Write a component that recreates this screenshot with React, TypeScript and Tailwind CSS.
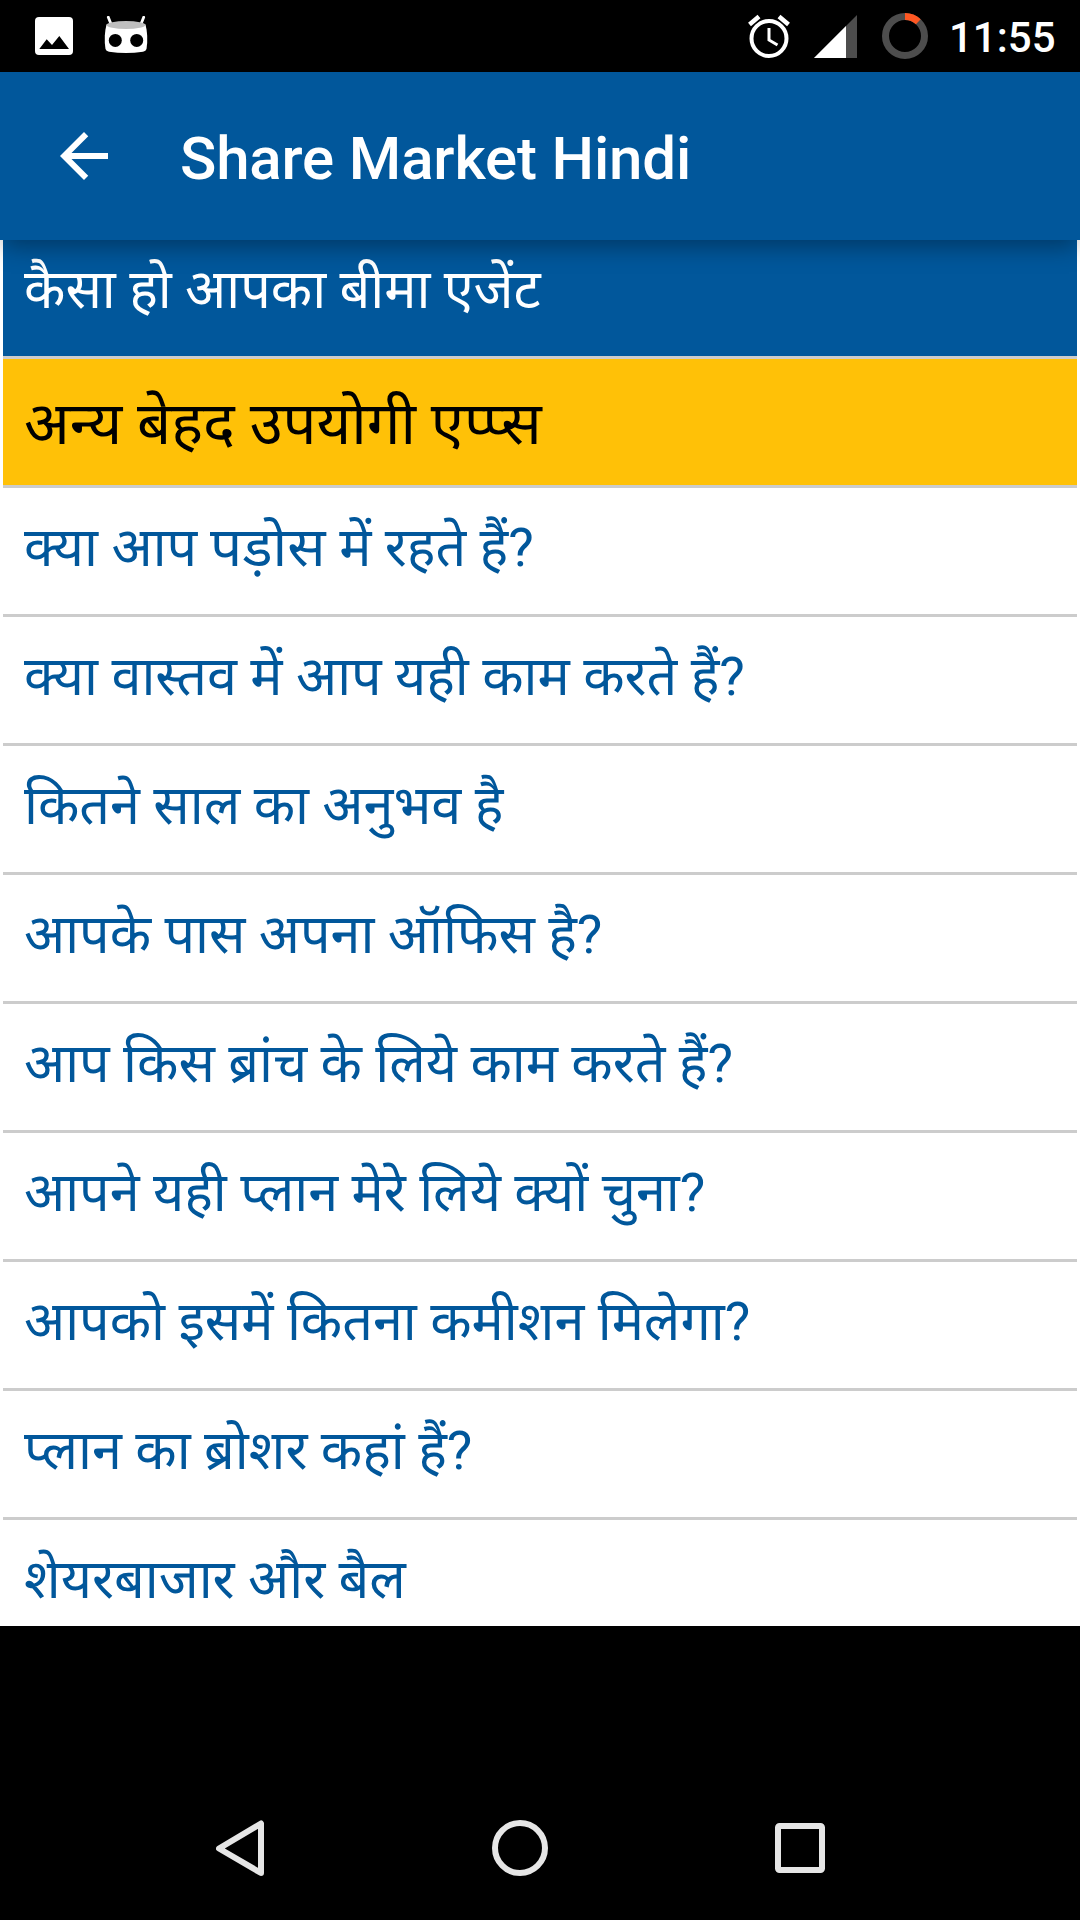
const rows = [
  <>
    क्या आप <span className="mr-[5.5px] inline-block origin-left scale-x-[1.052]">पड़ोस</span> में रहते हैं?
  </>,
  "क्या वास्तव में आप यही काम करते हैं?",
  "कितने साल का अनुभव है",
  "आपके पास अपना ऑफिस है?",
  "आप किस ब्रांच के लिये काम करते हैं?",
  "आपने यही प्लान मेरे लिये क्यों चुना?",
  "आपको इसमें कितना कमीशन मिलेगा?",
  "प्लान का ब्रोशर कहां हैं?",
  "शेयरबाजार और बैल",
];

function StatusBar() {
  return (
    <div className="flex h-[72px] shrink-0 items-center bg-black text-white">
      <svg className="ml-[35px] h-[38px] w-[38px]" viewBox="0 0 38 38">
        <rect width="38" height="38" rx="4" fill="#fff" />
        <path d="M4.3 32 L11.7 22.3 L17 28 L24.3 19 L34 32 Z" fill="#000" />
      </svg>
      <svg className="ml-[30px] h-[40px] w-[46px]" viewBox="0 0 46 40">
        <path d="M5.3 1.2 L8 8 M40.7 1.2 L38 8" stroke="#fff" strokeWidth="2.8" strokeLinecap="round" />
        <path d="M3.5 8.5 H42.5 Q45.5 20 43.5 33 Q43 35 40 35.7 Q23 38.3 6 35.7 Q3 35 2.5 33 Q0.5 20 3.5 8.5Z" fill="#fff" />
        <ellipse cx="23" cy="9" rx="19.5" ry="4" fill="#bfbfbf" />
        <circle cx="12.3" cy="24.4" r="6.5" fill="#000" />
        <circle cx="33.7" cy="24.4" r="6.5" fill="#000" />
      </svg>
      <svg className="ml-auto h-[44px] w-[42px]" viewBox="0 0 42 44" fill="none" stroke="#fff">
        <circle cx="21" cy="24.5" r="17.5" strokeWidth="4" />
        <path d="M21 14 V26 L29.5 31" strokeWidth="3" />
        <path d="M1.5 10.5 L11 2.5 M40.5 10.5 L31 2.5" strokeWidth="4.5" />
      </svg>
      <svg className="ml-[24px] h-[43px] w-[43px]" viewBox="0 0 43 43">
        <path d="M0 43 L43 0 V43Z" fill="#4d4d4d" />
        <path d="M0 43 L32 11 V43Z" fill="#fff" />
      </svg>
      <svg className="ml-[25px] h-[46px] w-[46px]" viewBox="0 0 46 46" fill="none" strokeWidth="7">
        <circle cx="23" cy="23" r="19.5" stroke="#4d4d4d" />
        <path d="M23 3.5 A19.5 19.5 0 0 1 36.3 8.7" stroke="#ff5722" />
      </svg>
      <span className="mr-[23px] ml-[21px] w-[108px] pt-[3px] text-[42px] leading-[72px] font-medium whitespace-nowrap">11:55</span>
    </div>
  );
}

function NavigationBar() {
  return (
    <nav className="flex h-[144px] items-center bg-black pl-[216px]">
      <svg className="h-[56px] w-[48px]" viewBox="0 0 48 56" fill="none" stroke="#e6e6e6" strokeWidth="6" strokeLinejoin="round">
        <path d="M3 28.5 L45 3.5 V53 Z" />
      </svg>
      <svg className="ml-[228px] h-[56px] w-[56px]" viewBox="0 0 56 56" fill="none" stroke="#e6e6e6" strokeWidth="6">
        <circle cx="28" cy="28" r="25" />
      </svg>
      <svg className="ml-[227px] h-[50px] w-[50px]" viewBox="0 0 50 50" fill="none" stroke="#e6e6e6" strokeWidth="6">
        <rect x="3" y="3" width="44" height="44" rx="1.5" />
      </svg>
    </nav>
  );
}

export default function App() {
  return (
    <div className="flex h-[1920px] w-[1080px] flex-col overflow-hidden bg-black font-[Roboto,'Noto_Sans','Noto_Sans_Devanagari',sans-serif]">
      <StatusBar />
      <header className="relative z-10 flex h-[168px] shrink-0 items-center bg-[#01579b] text-white shadow-[0_10px_22px_-3px_rgba(0,0,0,0.34)]">
        <svg className="ml-[60px] h-[48px] w-[48px]" viewBox="4 4 16 16" fill="#fff">
          <path d="M20 11H7.83l5.59-5.59L12 4l-8 8 8 8 1.41-1.41L7.83 13H20v-2z" />
        </svg>
        <h1 className="ml-[72px] pt-1.5 text-[60px] leading-[72px] font-medium tracking-[-0.15px] whitespace-nowrap">Share Market Hindi</h1>
      </header>
      <main className="h-[1386px] shrink-0 overflow-hidden bg-white px-[3px] text-[53.9px] leading-[100px] whitespace-nowrap text-[#01579b]">
        <div className="h-[119px] border-b-[3px] border-[#cccccc] bg-[#01579b] pl-[21px] text-white">कैसा हो आपका बीमा एजेंट</div>
        <div className="h-[129px] border-b-[3px] border-[#cccccc] bg-[#ffc107] pl-[21px] text-[59.9px] leading-[129px] text-black">अन्य बेहद उपयोगी एप्प्स</div>
        {rows.map((row, index) => (
          <div key={index} className="h-[129px] border-b-[3px] border-[#cccccc] pl-[21px] leading-[120px]">{row}</div>
        ))}
      </main>
      <div className="grow" />
      <NavigationBar />
    </div>
  );
}
